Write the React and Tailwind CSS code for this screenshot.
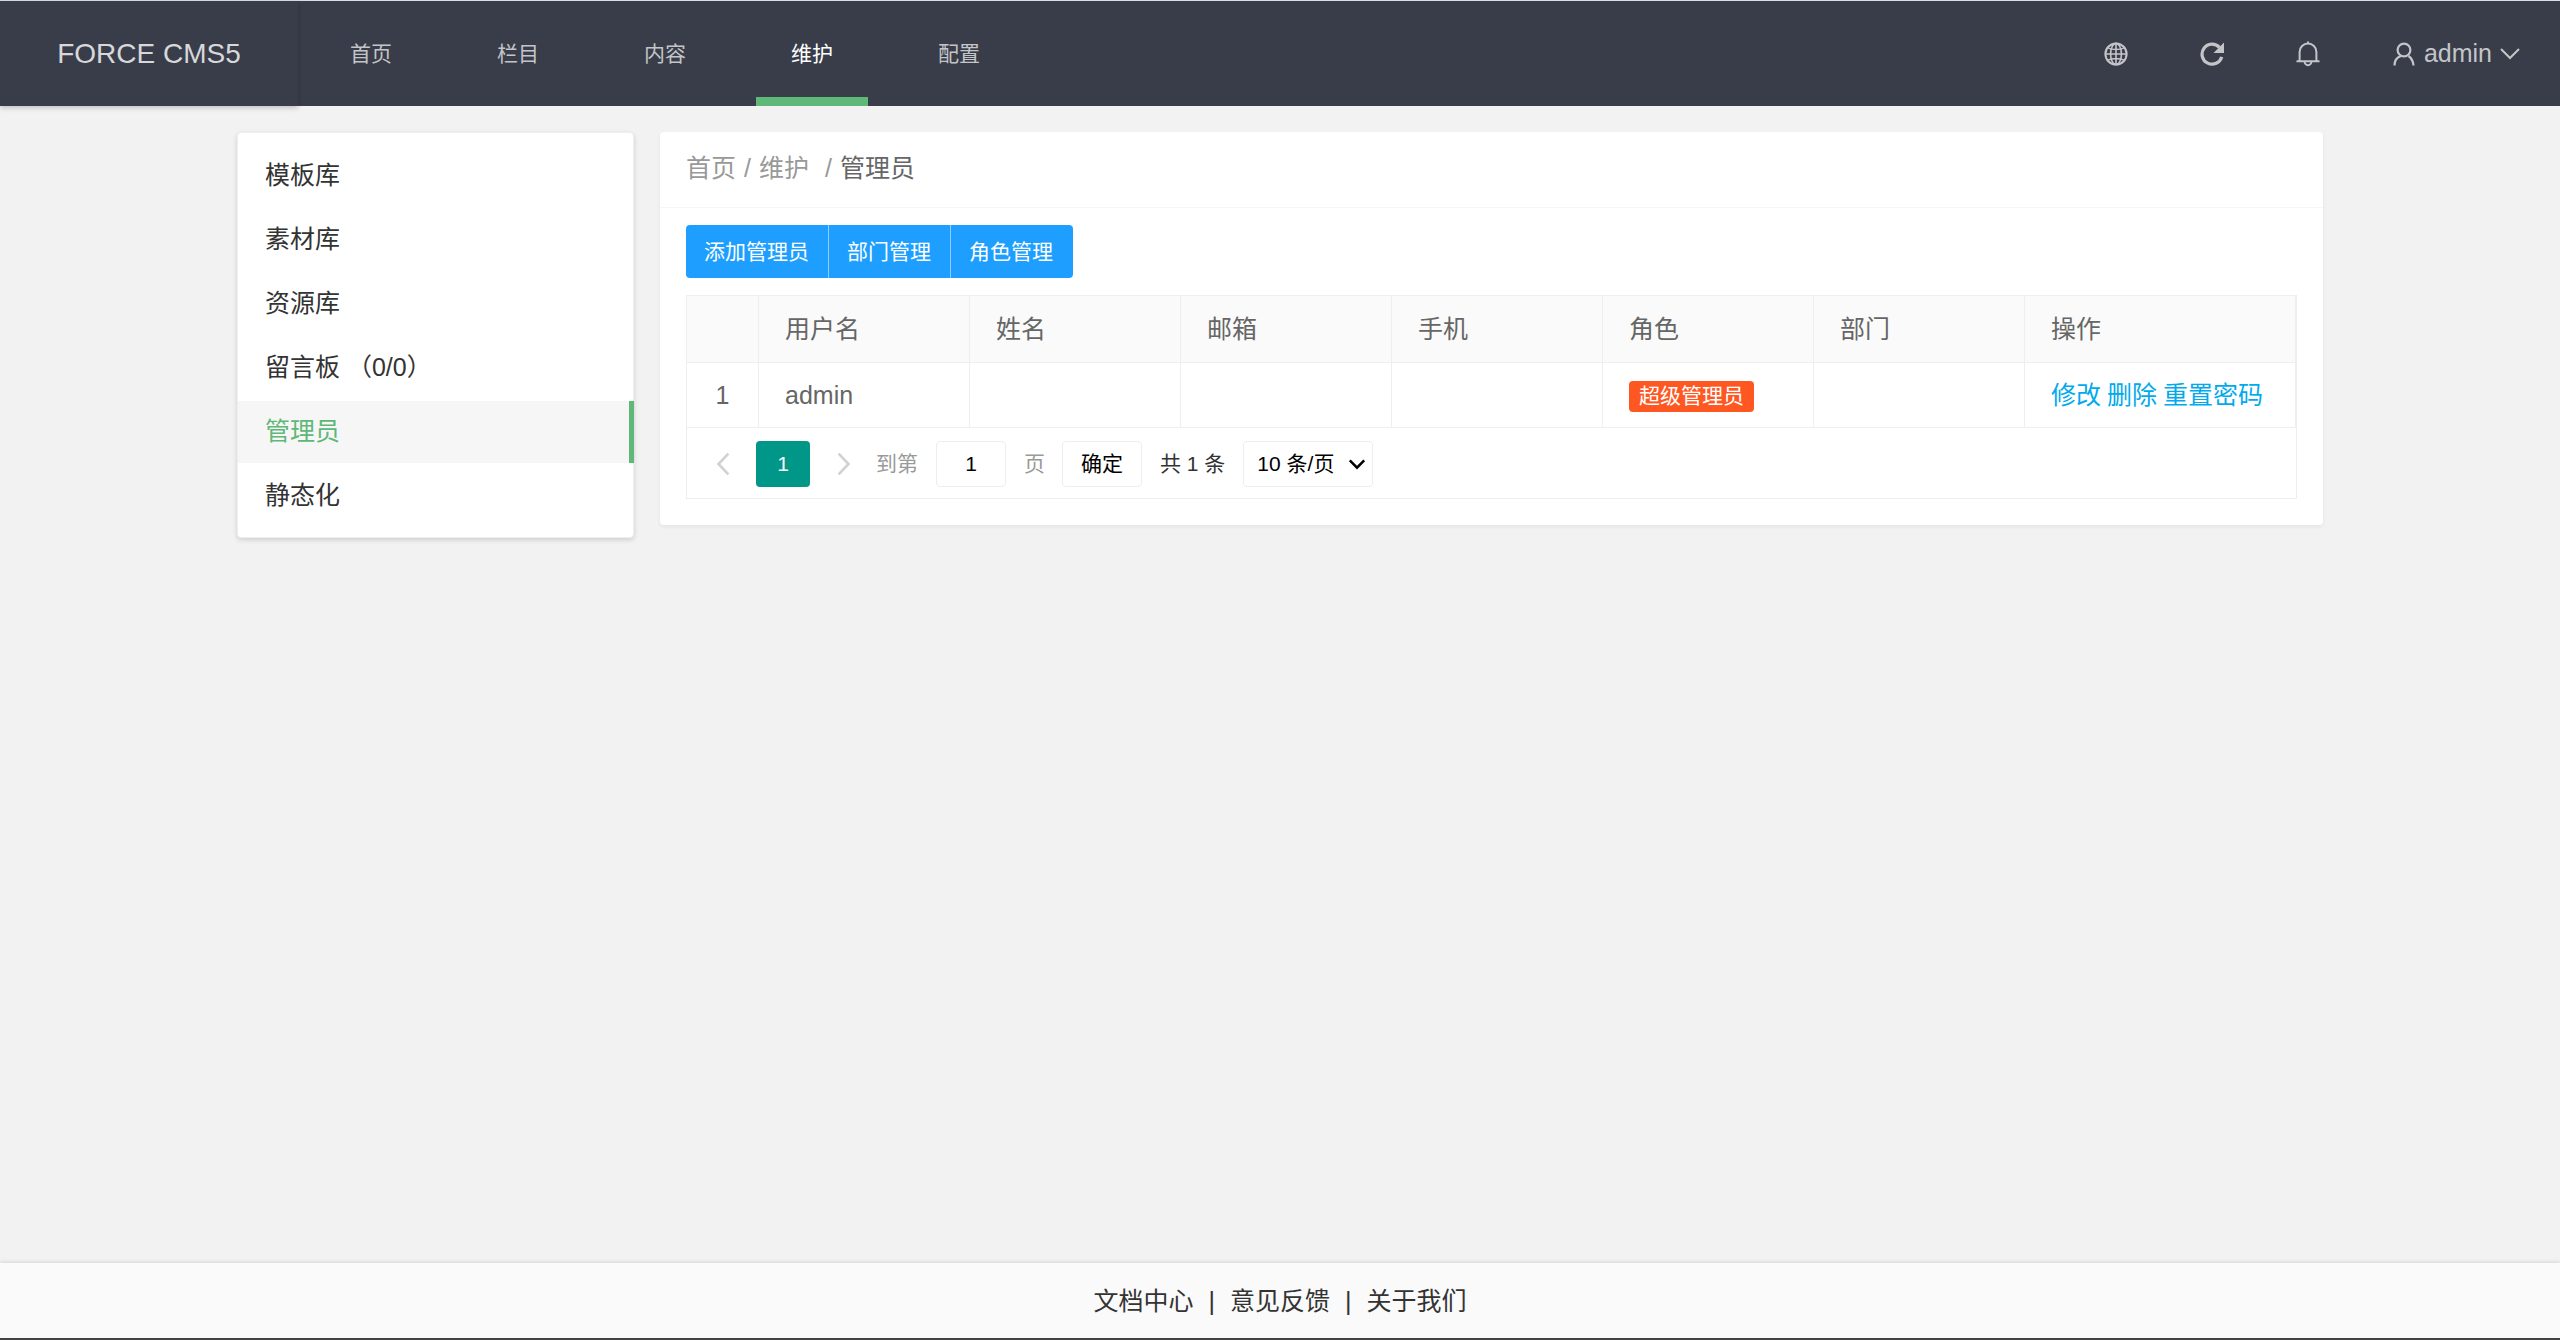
import React, { useState } from "react";

const navItems = ["首页", "栏目", "内容", "维护", "配置"];
const menuItems = ["模板库", "素材库", "资源库", "留言板 （0/0）", "管理员", "静态化"];
const columns = ["用户名", "姓名", "邮箱", "手机", "角色", "部门"];

const GlobeIcon = () => (
  <svg className="size-6" viewBox="0 0 24 24" fill="none" stroke="currentColor" strokeWidth="1.6">
    <circle cx="12" cy="12" r="10.6" strokeWidth="2" />
    <ellipse cx="12" cy="12" rx="5.4" ry="10.6" />
    <path d="M12 1v22M1 12h22M3.4 5.6c5 2.6 12.2 2.6 17.2 0M3.4 18.4c5-2.6 12.2-2.6 17.2 0" />
  </svg>
);

const RefreshIcon = () => (
  <svg className="size-6" viewBox="0 0 24 24" fill="none" stroke="currentColor" strokeWidth="3.2">
    <path d="M19.4 5.4A10 10 0 1 0 21.7 14.8" />
    <path d="M24 0.5v10.5h-10.5z" fill="currentColor" stroke="none" />
  </svg>
);

const BellIcon = () => (
  <svg className="h-[26px] w-6" viewBox="0 0 24 26" fill="none" stroke="currentColor" strokeWidth="2">
    <path d="M3.6 20V11a8.4 8.4 0 0 1 16.8 0v9M0.5 20.3h23M12 0.5v2.5M8.6 20.5a3.4 3.8 0 0 0 6.8 0" />
  </svg>
);

const UserIcon = () => (
  <svg className="size-6" viewBox="0 0 24 24" fill="none" stroke="currentColor" strokeWidth="2.2">
    <circle cx="12" cy="8" r="6.4" />
    <path d="M2.5 23.5c0-5 2.5-8.3 6.5-9.5M16.5 14c2.8 1.8 4.5 4.8 5 9.5" />
  </svg>
);

const Chevron = ({ d, className }) => (
  <svg className={className} viewBox="0 0 20 20" fill="none" stroke="currentColor">
    <path d={d} />
  </svg>
);

const App = () => {
  const [nav, setNav] = useState("维护");
  const [menu, setMenu] = useState("管理员");
  const [page, setPage] = useState("1");

  return (
    <div className="flex min-h-screen flex-col border-t border-b-2 border-t-[#d9dee3] border-b-[#444] bg-[#f2f2f2] font-['Liberation_Sans','Noto_Sans_CJK_SC',sans-serif] text-[25px] text-[#333]">
      {/* Top navbar */}
      <header className="flex h-[105px] items-stretch bg-[#393d49] text-[#c4c5c8]">
        <h1 className="flex w-[298px] items-center justify-center text-[28px] text-[#d7d8db] shadow-[0_2px_5px_rgba(0,0,0,0.2)]">
          FORCE CMS5
        </h1>
        <nav className="ml-[17px] flex gap-[35px] text-[21px]">
          {navItems.map((item) => (
            <a
              key={item}
              href="#"
              onClick={() => setNav(item)}
              className={`flex items-center border-y-[9px] border-t-transparent px-[35px] ${
                nav === item
                  ? "border-b-[#5fb878] text-white"
                  : "border-b-transparent"
              }`}
            >
              {item}
            </a>
          ))}
        </nav>
        <div className="ml-auto flex items-center gap-[72px] pr-10">
          <button type="button" aria-label="网站">
            <GlobeIcon />
          </button>
          <button type="button" aria-label="刷新">
            <RefreshIcon />
          </button>
          <button type="button" aria-label="消息">
            <BellIcon />
          </button>
          <button type="button" className="flex items-center gap-2">
            <UserIcon />
            admin
            <Chevron d="M1 5l9 9 9-9" className="size-5 stroke-2" />
          </button>
        </div>
      </header>

      {/* Content */}
      <main className="mx-auto flex w-full max-w-[2086px] flex-1 items-start gap-[26px] pt-[26px]">
        <aside className="flex w-[397px] shrink-0 flex-col gap-[2px] rounded border border-[#eee] bg-white pt-3 pb-[10px] shadow-[0_2px_5px_rgba(0,0,0,0.15)]">
          {menuItems.map((item) => (
            <a
              key={item}
              href="#"
              onClick={() => setMenu(item)}
              className={`-mr-px flex h-[62px] items-center border-r-[5px] pl-[27px] ${
                menu === item
                  ? "border-[#5fb878] bg-[#f6f6f6] text-[#5fb878]"
                  : "border-transparent"
              }`}
            >
              {item}
            </a>
          ))}
        </aside>

        <section className="min-w-0 flex-1 rounded bg-white shadow-[0_2px_4px_rgba(0,0,0,0.06)]">
          <div className="flex h-[76px] items-center gap-2 border-b border-[#f6f6f6] px-[26px] pb-0.5 text-[#999]">
            <a href="#">首页</a>
            <span>/</span>
            <a href="#" className="mr-2">维护</a>
            <span>/</span>
            <span className="text-[#666]">管理员</span>
          </div>

          <div className="px-[26px] pt-[17px] pb-[26px]">
            <div className="inline-flex h-[53px] overflow-hidden rounded bg-[#1e9fff] align-top text-[21px] text-white">
              <button type="button" className="border-r border-white/50 pr-[19px] pl-[18px]">添加管理员</button>
              <button type="button" className="border-r border-white/50 pr-[19px] pl-[18px]">部门管理</button>
              <button type="button" className="pr-5 pl-[18px]">角色管理</button>
            </div>

            <div className="mt-[17px] border border-[#eee] text-[#666]">
              <table className="w-full table-fixed border-separate border-spacing-0 text-left">
                <thead>
                  <tr className="h-[67px] bg-[#fafafa]">
                    <th className="w-[72px] border-r border-b border-[#eee]"></th>
                    {columns.map((col) => (
                      <th key={col} className="w-[211px] border-r border-b border-[#eee] px-[26px] pt-0.5 font-normal">
                        {col}
                      </th>
                    ))}
                    <th className="border-r border-b border-[#eee] px-[26px] pt-0.5 font-normal">操作</th>
                  </tr>
                </thead>
                <tbody>
                  <tr className="h-[65px]">
                    <td className="border-r border-b border-[#eee] pt-0.5 text-center">1</td>
                    <td className="border-r border-b border-[#eee] px-[26px] pt-0.5">admin</td>
                    <td className="border-r border-b border-[#eee]"></td>
                    <td className="border-r border-b border-[#eee]"></td>
                    <td className="border-r border-b border-[#eee]"></td>
                    <td className="border-r border-b border-[#eee] px-[26px] pt-0.5">
                      <span className="flex h-[31px] w-fit items-center rounded bg-[#ff5722] px-[10px] text-[21px] text-white">
                        超级管理员
                      </span>
                    </td>
                    <td className="border-r border-b border-[#eee]"></td>
                    <td className="border-r border-b border-[#eee] px-[26px] pt-0.5 whitespace-nowrap text-[#01aaed]">
                      <span className="flex gap-1.5">
                        <a href="#">修改</a>
                        <a href="#">删除</a>
                        <a href="#">重置密码</a>
                      </span>
                    </td>
                  </tr>
                </tbody>
              </table>

              {/* Pagination */}
              <div className="flex items-center px-[26px] pt-[13px] pb-[11px] text-[21px]">
                <button type="button" aria-label="上一页" className="text-[#d2d2d2]">
                  <Chevron d="M14 0.5L5 10l9 9.5" className="size-[22px] stroke-[2.4]" />
                </button>
                <button type="button" className="ml-[21px] h-[46px] w-[54px] rounded bg-[#009688] text-white">1</button>
                <button type="button" aria-label="下一页" className="ml-[22px] text-[#d2d2d2]">
                  <Chevron d="M6 0.5L15 10l-9 9.5" className="size-[22px] stroke-[2.4]" />
                </button>
                <label htmlFor="page" className="ml-[22px] text-[#999]">到第</label>
                <input
                  id="page"
                  value={page}
                  onChange={(e) => setPage(e.target.value)}
                  className="ml-[18px] h-[46px] w-[70px] rounded border border-[#eee] text-center text-black"
                />
                <span className="ml-[18px] text-[#999]">页</span>
                <button type="button" className="ml-[17px] h-[46px] w-[80px] rounded border border-[#eee] text-black">
                  确定
                </button>
                <span className="mx-[18px] text-[#333]">共 1 条</span>
                <div className="relative text-black">
                  <select
                    aria-label="每页条数"
                    className="h-[46px] w-[130px] appearance-none rounded border border-[#eee] pl-[13px]"
                  >
                    <option>10 条/页</option>
                    <option>20 条/页</option>
                    <option>50 条/页</option>
                  </select>
                  <Chevron
                    d="M2 6l8 8 8-8"
                    className="pointer-events-none absolute top-[14px] right-[7px] size-[18px] stroke-[2.8]"
                  />
                </div>
              </div>
            </div>
          </div>
        </section>
      </main>

      {/* Footer */}
      <footer className="flex h-[75px] items-center justify-center gap-[15px] bg-[#fafafa] pt-[3px] shadow-[0_-1px_4px_rgba(0,0,0,0.12)]">
        <a href="#">文档中心</a>
        <span>|</span>
        <a href="#">意见反馈</a>
        <span>|</span>
        <a href="#">关于我们</a>
      </footer>
    </div>
  );
};

export default App;
